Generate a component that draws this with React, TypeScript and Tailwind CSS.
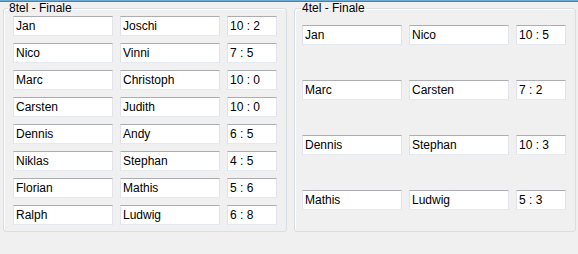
import React from "react";

const eighth = [
  ["Jan", "Joschi", "10 : 2"],
  ["Nico", "Vinni", "7 : 5"],
  ["Marc", "Christoph", "10 : 0"],
  ["Carsten", "Judith", "10 : 0"],
  ["Dennis", "Andy", "6 : 5"],
  ["Niklas", "Stephan", "4 : 5"],
  ["Florian", "Mathis", "5 : 6"],
  ["Ralph", "Ludwig", "6 : 8"],
];

const quarter = [
  ["Jan", "Nico", "10 : 5"],
  ["Marc", "Carsten", "7 : 2"],
  ["Dennis", "Stephan", "10 : 3"],
  ["Mathis", "Ludwig", "5 : 3"],
];

function Box({ text, w }: { text: string; w: string }) {
  return (
    <div
      className={`${w} h-[20px] bg-white border border-t-[#abadb3] border-x-[#e2e3ea] border-b-[#e3e9ef] pl-[2px] flex items-center text-[12px] leading-[14px] text-black`}
    >
      {text}
    </div>
  );
}

function Group({
  title,
  rows,
  className,
  legend,
  gap,
}: {
  title: string;
  rows: string[][];
  className: string;
  legend: string;
  gap: string;
}) {
  return (
    <fieldset
      className={`border border-[#d5dfe5] rounded-[3px] shadow-[inset_1px_1px_0_#fff] ${className}`}
    >
      <legend className={`${legend} px-[1px] text-[12px] leading-[13px] text-black`}>
        {title}
      </legend>
      <div className={`flex flex-col ${gap}`}>
        {rows.map((r, i) => (
          <div key={i} className="flex gap-[7px]">
            <Box text={r[0]} w="w-[100px]" />
            <Box text={r[1]} w="w-[100px]" />
            <Box text={r[2]} w="w-[50px]" />
          </div>
        ))}
      </div>
    </fieldset>
  );
}

export default function App() {
  return (
    <div
      className="w-[578px] h-[254px] bg-[#f0f0f0] overflow-hidden"
      style={{ fontFamily: '"Liberation Sans", Arial, sans-serif' }}
    >
      <div className="h-[1px] bg-[#6aaad3]" />
      <div className="h-[1px] bg-[#3f86b6]" />
      <div className="flex">
        <Group
          title="8tel - Finale"
          rows={eighth}
          gap="gap-[7px]"
          legend="ml-[-5px]"
          className="ml-[3px] w-[284px] h-[230px] pl-[9px] pt-[1px]"
        />
        <Group
          title="4tel - Finale"
          rows={quarter}
          gap="gap-[35px]"
          legend="ml-[-1px]"
          className="ml-[7px] w-[282px] h-[230px] pl-[7px] pt-[10px]"
        />
      </div>
    </div>
  );
}
